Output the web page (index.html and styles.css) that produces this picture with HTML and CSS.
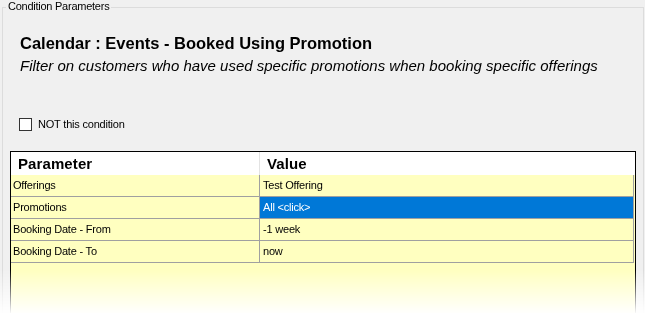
FILE: index.html
```html
<!DOCTYPE html>
<html>
<head>
<meta charset="utf-8">
<link rel="stylesheet" href="styles.css">
</head>
<body>
<div class="page">
  <div class="group">
    <div class="legend">Condition Parameters</div>
    <div class="head">
      <h1 class="title">Calendar : Events - Booked Using Promotion</h1>
      <p class="subtitle">Filter on customers who have used specific promotions when booking specific offerings</p>
    </div>
    <label class="not"><span class="box"></span><span>NOT this condition</span></label>
    <div class="grid">
      <div class="row hdr"><div class="c1">Parameter</div><div class="c2">Value</div></div>
      <div class="row"><div class="c1">Offerings</div><div class="c2">Test Offering</div></div>
      <div class="row"><div class="c1">Promotions</div><div class="c2 sel">All &lt;click&gt;</div></div>
      <div class="row"><div class="c1">Booking Date - From</div><div class="c2">-1 week</div></div>
      <div class="row"><div class="c1">Booking Date - To</div><div class="c2">now</div></div>
    </div>
  </div>
</div>
</body>
</html>
```
FILE: styles.css
```css
html, body { margin: 0; padding: 0; background: #ffffff; }
body { font-family: "Liberation Sans", Arial, sans-serif; color: #000; }
.page {
  width: 645px; height: 313px; overflow: hidden; background: #f0f0f0;
  padding-top: 7px; box-sizing: border-box;
  -webkit-mask-image: linear-gradient(to bottom, #000 270px, rgba(0,0,0,0.03) 313px);
  mask-image: linear-gradient(to bottom, #000 270px, rgba(0,0,0,0.03) 313px);
}
.group {
  position: relative; margin: 0 1px 0 2px; height: 320px;
  border: 1px solid #dcdcdc; border-bottom: none;
  display: flex; flex-direction: column;
}
.legend {
  position: absolute; top: -8px; left: 3px; padding: 0 2px;
  background: #f0f0f0; font-size: 11px; line-height: 13px; letter-spacing: -0.25px; color: #000;
}
.head { padding-left: 17px; }
.title { margin: 25px 0 0; font-size: 16.5px; line-height: 20px; font-weight: bold; }
.subtitle { margin: 4px 0 0; font-size: 15px; line-height: 18px; font-style: italic; }
.not { display: flex; align-items: center; gap: 6px; margin: 43px 0 0 16px; font-size: 11px; line-height: 13px; height: 13px; letter-spacing: -0.2px; }
.box { width: 11px; height: 11px; border: 1px solid #333; background: #fff; }
.grid {
  margin: 20px 0 0 7px; width: 624px; flex: 1;
  border: 1px solid #000; background: #ffffc0;
  font-size: 11px; letter-spacing: -0.2px;
}
.row { display: flex; height: 21px; border-bottom: 1px solid #a0a0a0; width: 622px; border-right: 1px solid #a0a0a0; }
.row .c1 { width: 246px; padding-left: 2px; border-right: 1px solid #a0a0a0; line-height: 21px; }
.row .c2 { flex: 1; padding-left: 3px; line-height: 21px; }
.row .sel { background: #0078d7; color: #fff; }
.hdr { height: 23px; background: #fff; border-bottom: none; border-right: none; width: 624px; font-size: 15px; font-weight: bold; letter-spacing: 0.1px; }
.hdr .c1 { line-height: 23px; padding-left: 7px; width: 241px; border-right: 1px solid #e3e3e3; }
.hdr .c2 { line-height: 23px; padding-left: 7px; }
```
